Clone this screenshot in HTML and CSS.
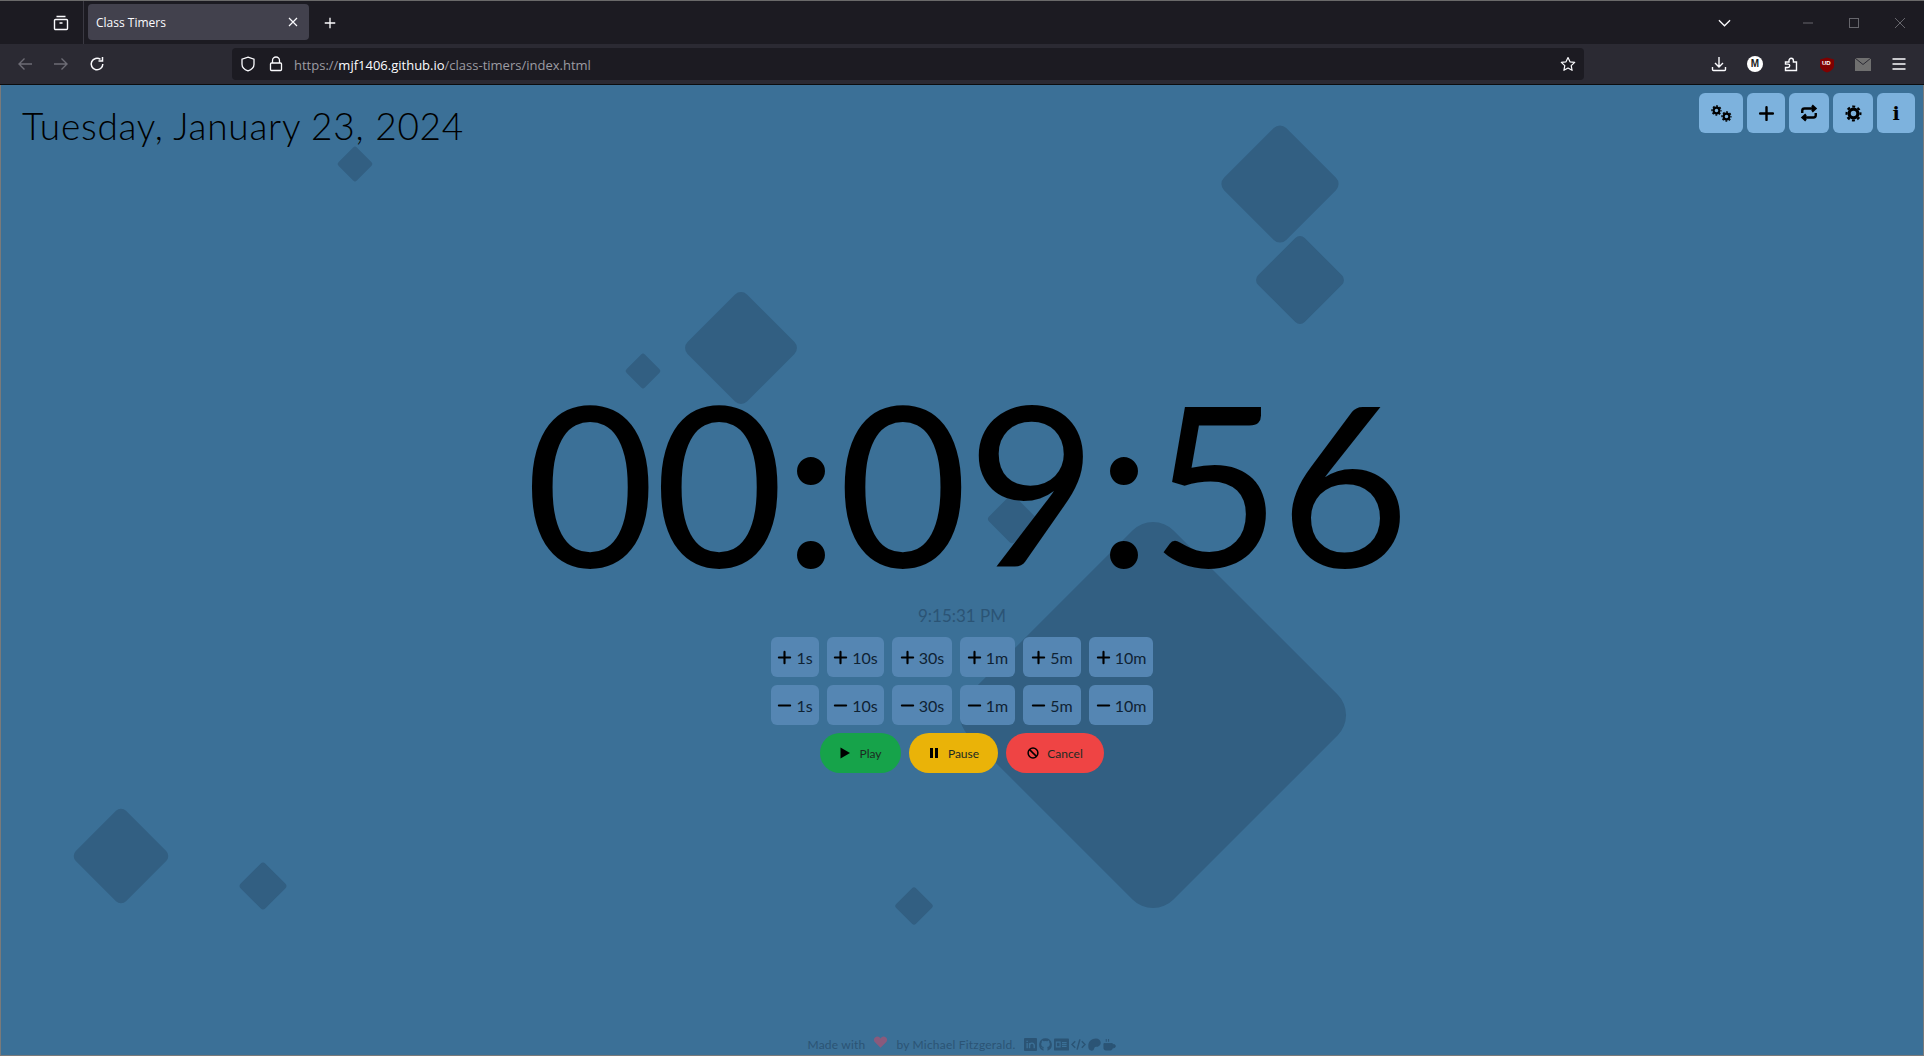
FILE: index.html
```html
<!DOCTYPE html>
<html lang="en">
<head>
    <meta charset="UTF-8">
    <title>Class Timers</title>
    <link rel="stylesheet" href="styles.css">
</head>
<body>
    <svg class="sprites" width="0" height="0">
        <symbol id="i-plus" viewBox="0 0 24 24"><path d="M12 3v18M3 12h18" fill="none" stroke="currentColor" stroke-width="3.400" stroke-linecap="round"/></symbol>
        <symbol id="i-minus" viewBox="0 0 24 24"><path d="M3 12h18" fill="none" stroke="currentColor" stroke-width="3.400" stroke-linecap="round"/></symbol>
        <symbol id="i-gear" viewBox="0 0 24 24">
            <circle cx="12" cy="12" r="6.200" fill="none" stroke="currentColor" stroke-width="4.600"/>
            <circle cx="12" cy="12" r="9.800" fill="none" stroke="currentColor" stroke-width="3" stroke-dasharray="4.200 3.500" stroke-dashoffset="2.100"/>
        </symbol>
    </svg>

    <div class="titlebar">
        <div class="tabs-view">
            <svg class="ff-icon" viewBox="0 0 16 16"><path d="M3.500 1.500h9M2.500 4.500h11a1 1 0 0 1 1 1v8a1 1 0 0 1-1 1h-11a1 1 0 0 1-1-1v-8a1 1 0 0 1 1-1zM6.500 8h3" fill="none" stroke="#fbfbfe" stroke-width="1.400"/></svg>
        </div>
        <div class="tab">
            <span class="tab-title">Class Timers</span>
            <svg class="tab-close" viewBox="0 0 12 12"><path d="M2 2l8 8M10 2l-8 8" stroke="#fbfbfe" stroke-width="1.200"/></svg>
        </div>
        <svg class="ff-icon new-tab" viewBox="0 0 16 16"><path d="M8 2v12M2 8h12" stroke="#fbfbfe" stroke-width="1.500"/></svg>
        <div class="titlebar-right">
            <svg class="tabs-list" viewBox="0 0 14 8"><path d="M1 1l6 6 6-6" fill="none" stroke="#fbfbfe" stroke-width="1.400"/></svg>
            <div class="win-controls">
                <svg viewBox="0 0 10 10"><path d="M0 5h10" stroke="#66666c" stroke-width="1"/></svg>
                <svg viewBox="0 0 10 10"><rect x=".5" y=".5" width="9" height="9" fill="none" stroke="#66666c"/></svg>
                <svg viewBox="0 0 10 10"><path d="M0 0l10 10M10 0L0 10" stroke="#66666c" stroke-width="1"/></svg>
            </div>
        </div>
    </div>

    <div class="toolbar">
        <div class="nav-buttons">
            <svg class="ff-icon" viewBox="0 0 16 16"><path d="M15 8H2M7.500 2.500L2 8l5.500 5.500" fill="none" stroke="#6d6c75" stroke-width="1.400"/></svg>
            <svg class="ff-icon" viewBox="0 0 16 16"><path d="M1 8h13M8.500 2.500L14 8l-5.500 5.500" fill="none" stroke="#6d6c75" stroke-width="1.400"/></svg>
            <svg class="ff-icon" viewBox="0 0 16 16"><path d="M13.800 8A5.800 5.800 0 1 1 11.500 3.400M13.500 1v4h-4" fill="none" stroke="#fbfbfe" stroke-width="1.500"/></svg>
        </div>
        <div class="urlbar">
            <svg class="ff-icon" viewBox="0 0 16 16"><path d="M8 1.200l6 2v5c0 3.500-3 5.600-6 6.700-3-1.100-6-3.200-6-6.700v-5z" fill="none" stroke="#fbfbfe" stroke-width="1.300"/></svg>
            <svg class="ff-icon" viewBox="0 0 16 16"><path d="M4.500 7V4.500a3.500 3.500 0 0 1 7 0V7M3.500 7h9a1 1 0 0 1 1 1v5.500a1 1 0 0 1-1 1h-9a1 1 0 0 1-1-1V8a1 1 0 0 1 1-1z" fill="none" stroke="#fbfbfe" stroke-width="1.300"/></svg>
            <span class="url"><span class="url-dim">https://</span>mjf1406.github.io<span class="url-dim">/class-timers/index.html</span></span>
            <svg class="ff-icon url-star" viewBox="0 0 16 16"><path d="M8 1.500l2 4.300 4.700.6-3.500 3.200.9 4.700L8 12l-4.100 2.300.9-4.700L1.300 6.400 6 5.800z" fill="none" stroke="#fbfbfe" stroke-width="1.200" stroke-linejoin="round"/></svg>
        </div>
        <div class="ext-buttons">
            <svg class="ff-icon" viewBox="0 0 16 16"><path d="M8 1v9.500M4 7l4 4 4-4M1.500 11v2.500a1 1 0 0 0 1 1h11a1 1 0 0 0 1-1V11" fill="none" stroke="#fbfbfe" stroke-width="1.400"/></svg>
            <span class="ext-m">M</span>
            <svg class="ff-icon" viewBox="0 0 16 16"><path d="M2.500 6H6V4.500a2.200 2.200 0 1 1 4.400 0V6h3.100v8.500h-11V11.500H5a1.700 1.700 0 0 0 0-3.400H2.500z" fill="none" stroke="#fbfbfe" stroke-width="1.400"/></svg>
            <span class="ext-ublock"><svg viewBox="0 0 16 16"><path d="M8 .5l7 2v6c0 3.500-3.500 5.800-7 7-3.500-1.200-7-3.500-7-7v-6z" fill="#800000"/></svg><span class="ext-ublock-text">UD</span></span>
            <svg class="ff-icon" viewBox="0 0 16 14"><path d="M0 1h16v13H0z" fill="#6f6f6f"/><path d="M0 1l8 6.500L16 1" fill="none" stroke="#2b2a33" stroke-width="1"/></svg>
            <svg class="ff-icon" viewBox="0 0 16 16"><path d="M1.500 3h13M1.500 8h13M1.500 13h13" stroke="#fbfbfe" stroke-width="1.500"/></svg>
        </div>
    </div>

    <div class="page">
        <div class="shape s1"></div>
        <div class="shape s2"></div>
        <div class="shape s3"></div>
        <div class="shape s4"></div>
        <div class="shape s5"></div>
        <div class="shape s6"></div>
        <div class="shape s7"></div>
        <div class="shape s8"></div>
        <div class="shape s9"></div>
        <div class="shape s10"></div>

        <div class="header">
            <h1 class="date">Tuesday, January 23, 2024</h1>
            <div class="top-buttons">
                <button class="top-btn wide">
                    <svg class="gear-a"><use href="#i-gear"/></svg>
                    <svg class="gear-b"><use href="#i-gear"/></svg>
                </button>
                <button class="top-btn"><svg class="top-icon"><use href="#i-plus"/></svg></button>
                <button class="top-btn mid">
                    <svg class="top-icon repeat" viewBox="0 0 24 24"><path d="M3 12V9a3 3 0 0 1 3-3h13M16 2l4.500 4-4.500 4M21 12v3a3 3 0 0 1-3 3H5M8 14l-4.500 4L8 22" fill="none" stroke="currentColor" stroke-width="3.200"/></svg>
                </button>
                <button class="top-btn mid"><svg class="top-icon cog"><use href="#i-gear"/></svg></button>
                <button class="top-btn"><span class="info">i</span></button>
            </div>
        </div>

        <div class="timer-block">
            <div class="timer">00:09:56</div>
            <div class="clock">9:15:31 PM</div>
            <div class="adjust-row">
                <button class="adjust"><svg><use href="#i-plus"/></svg>1s</button>
                <button class="adjust"><svg><use href="#i-plus"/></svg>10s</button>
                <button class="adjust"><svg><use href="#i-plus"/></svg>30s</button>
                <button class="adjust"><svg><use href="#i-plus"/></svg>1m</button>
                <button class="adjust"><svg><use href="#i-plus"/></svg>5m</button>
                <button class="adjust"><svg><use href="#i-plus"/></svg>10m</button>
            </div>
            <div class="adjust-row">
                <button class="adjust"><svg><use href="#i-minus"/></svg>1s</button>
                <button class="adjust"><svg><use href="#i-minus"/></svg>10s</button>
                <button class="adjust"><svg><use href="#i-minus"/></svg>30s</button>
                <button class="adjust"><svg><use href="#i-minus"/></svg>1m</button>
                <button class="adjust"><svg><use href="#i-minus"/></svg>5m</button>
                <button class="adjust"><svg><use href="#i-minus"/></svg>10m</button>
            </div>
            <div class="actions">
                <button class="action play"><svg viewBox="0 0 12 12"><path d="M1.500 .5v11l9.500-5.500z" fill="#000"/></svg>Play</button>
                <button class="action pause"><svg viewBox="0 0 12 12"><path d="M2 1h3v10H2zM7 1h3v10H7z" fill="#000"/></svg>Pause</button>
                <button class="action cancel"><svg viewBox="0 0 12 12"><circle cx="6" cy="6" r="4.900" fill="none" stroke="#000" stroke-width="1.500"/><path d="M2.600 2.600l6.800 6.800" stroke="#000" stroke-width="1.500"/></svg>Cancel</button>
            </div>
        </div>

        <div class="footer">
            <span>Made with</span>
            <svg class="heart" viewBox="0 0 16 14"><path d="M8 14L1.200 7.200A4 4 0 0 1 7 1.600L8 2.600l1-1a4 4 0 0 1 5.800 5.600z" fill="#8a5a7c"/></svg>
            <span>by Michael Fitzgerald.</span>
            <span class="socials">
                <svg viewBox="0 0 14 14"><path d="M1 0h12a1 1 0 0 1 1 1v12a1 1 0 0 1-1 1H1a1 1 0 0 1-1-1V1a1 1 0 0 1 1-1z" fill="#2b5475"/><path d="M3.400 5.500v5.500M3.400 3v1.300M6 11V5.500M6 8c0-3 5-3.500 5 0v3" fill="none" stroke="#3b7097" stroke-width="1.500"/></svg>
                <svg viewBox="0 0 14 14"><path d="M7 .2a6.900 6.900 0 0 0-2.200 13.400v-2.400C3 11.500 2.600 10.400 2.200 9.800c1 .2 1.500 1.200 2.600 1.100 0-.5.200-.8.400-1.100C3.500 9.500 2.400 8.700 2.400 6.500c0-.8.300-1.400.7-1.900-.1-.4-.2-1 .1-1.900.8 0 1.500.5 1.900.8a6.500 6.500 0 0 1 3.800 0c.4-.3 1.100-.8 1.900-.8.300.9.200 1.500.1 1.900.4.500.7 1.100.7 1.900 0 2.200-1.100 3-2.800 3.300.3.300.4.800.4 1.400v2.400A6.900 6.900 0 0 0 7 .2z" fill="#2b5475"/></svg>
                <svg class="card" viewBox="0 0 16 13"><path d="M1 0h14a1 1 0 0 1 1 1v11a1 1 0 0 1-1 1H1a1 1 0 0 1-1-1V1a1 1 0 0 1 1-1z" fill="#2b5475"/><path d="M2.500 4h4v5h-4zM8.500 4.500h5M8.500 6.500h5M8.500 8.500h5" fill="none" stroke="#3b7097" stroke-width="1.200"/></svg>
                <svg class="card" viewBox="0 0 16 13"><path d="M4.500 3L1 6.500 4.500 10M11.500 3L15 6.500 11.500 10M9.500 1L6.500 12" fill="none" stroke="#2b5475" stroke-width="1.600"/></svg>
                <svg viewBox="0 0 14 14"><path d="M8.500 .5c3 0 5.200 2 5.200 4.500 0 2.800-2.500 4.500-5 4.500-1.800 0-2 2-2.500 3-.4.900-1.500 1.500-3 1C1 13 .3 11 .3 8.500.3 3.500 4 .5 8.500 .5z" fill="#2b5475"/></svg>
                <svg viewBox="0 0 14 14"><path d="M1 6h9v5a2 2 0 0 1-2 2H3a2 2 0 0 1-2-2zM10 7h1.500a1.800 1.800 0 0 1 0 3.600H10" fill="#2b5475" stroke="#2b5475"/><path d="M3.500 1v3M6 1v3" stroke="#2b5475" stroke-width="1.100"/></svg>
            </span>
        </div>
    </div>
</body>
</html>
```

FILE: styles.css
```css
* {
    margin: 0;
    padding: 0;
    box-sizing: border-box;
}

html, body {
    height: 100%;
    overflow: hidden;
}

body {
    font-family: "Open Sans", "Noto Sans", sans-serif;
    background: #3b7097;
    display: flex;
    flex-direction: column;
}

button {
    border: none;
    font: inherit;
    color: inherit;
}

.sprites {
    position: absolute;
}

/* browser chrome */
.titlebar {
    height: 44px;
    background: #1c1b22;
    border-top: 1px solid #6a6a6a;
    display: flex;
    align-items: center;
}

.ff-icon {
    width: 16px;
    height: 16px;
    flex: none;
}

.tabs-view {
    width: 84px;
    height: 100%;
    padding-left: 53px;
    display: flex;
    align-items: center;
    border-right: 1px solid #3a3942;
}

.tab {
    width: 221px;
    height: 36px;
    margin-left: 4px;
    margin-top: -2px;
    padding: 1px 10px 0 8px;
    background: #42414d;
    border-radius: 4px;
    display: flex;
    align-items: center;
    justify-content: space-between;
    color: #fbfbfe;
    font-size: 12px;
}

.tab-close {
    width: 12px;
    height: 12px;
}

.new-tab {
    margin-left: 14px;
    width: 14px;
    height: 14px;
}

.titlebar-right {
    margin-left: auto;
    display: flex;
    align-items: center;
}

.tabs-list {
    width: 13px;
    height: 8px;
    margin-right: 72px;
}

.win-controls {
    display: flex;
    gap: 36px;
    padding-right: 19px;
}

.win-controls svg {
    width: 10px;
    height: 10px;
}

.toolbar {
    height: 41px;
    background: #2b2a33;
    border-bottom: 1px solid #0c0c0d;
    display: flex;
    align-items: center;
}

.nav-buttons {
    display: flex;
    gap: 20px;
    padding-left: 17px;
}

.urlbar {
    width: 1352px;
    height: 32px;
    margin-left: 127px;
    padding: 0 8px;
    background: #1c1b22;
    border-radius: 4px;
    display: flex;
    align-items: center;
}

.urlbar .ff-icon + .ff-icon {
    margin-left: 12px;
}

.url {
    margin-left: 10px;
    padding-top: 2px;
    font-size: 13px;
    color: #fbfbfe;
}

.url-dim {
    color: #9d9ca3;
}

.urlbar .url-star {
    margin-left: auto;
}

.ext-buttons {
    display: flex;
    align-items: center;
    gap: 20px;
    margin-left: 127px;
}

.ext-m {
    width: 16px;
    height: 16px;
    border-radius: 50%;
    background: #fff;
    color: #1c1b22;
    font: bold 10px/16px "Liberation Sans", sans-serif;
    text-align: center;
}

.ext-ublock {
    position: relative;
    width: 16px;
    height: 16px;
}

.ext-ublock svg {
    width: 16px;
    height: 16px;
}

.ext-ublock-text {
    position: absolute;
    left: 3px;
    top: 4px;
    color: #fff;
    font: bold 6px/7px "Liberation Sans", sans-serif;
}

/* page */
.page {
    position: relative;
    flex: 1;
    display: flex;
    flex-direction: column;
    overflow: hidden;
    font-family: "Lato", "Noto Sans", sans-serif;
}

/* window edge, sits above the shapes */
.page::after {
    content: "";
    position: absolute;
    inset: 0;
    border: 1px solid #7a7a7a;
    border-top: none;
    pointer-events: none;
}

.shape {
    position: absolute;
    background: #325f82;
    transform: translate(-50%, -50%) rotate(45deg);
    border-radius: 10%;
}

.s1 { left: 355px; top: 79px; width: 26px; height: 26px; }
.s2 { left: 1280px; top: 99px; width: 88px; height: 88px; }
.s3 { left: 1300px; top: 195px; width: 66px; height: 66px; }
.s4 { left: 741px; top: 263px; width: 84px; height: 84px; }
.s5 { left: 643px; top: 286px; width: 26px; height: 26px; }
.s6 { left: 1012px; top: 434px; width: 36px; height: 36px; }
.s7 { left: 1153px; top: 630px; width: 290px; height: 290px; }
.s8 { left: 121px; top: 771px; width: 71px; height: 71px; }
.s9 { left: 263px; top: 801px; width: 35px; height: 35px; }
.s10 { left: 914px; top: 821px; width: 28px; height: 28px; }

.header {
    position: relative;
    display: flex;
    justify-content: space-between;
    align-items: flex-start;
    padding: 8px 9px 0 22px;
}

.date {
    margin-top: 11px;
    font-size: 37px;
    line-height: 44px;
    font-weight: 300;
    color: #000;
    letter-spacing: 0.75px;
}

.top-buttons {
    display: flex;
    gap: 4px;
}

.top-btn {
    position: relative;
    width: 38px;
    height: 40px;
    background: #7db2dd;
    border-radius: 6px;
    display: flex;
    align-items: center;
    justify-content: center;
    color: #000;
}

.top-btn.wide {
    width: 44px;
}

.top-btn.mid {
    width: 40px;
}

.top-icon {
    width: 17px;
    height: 17px;
}

.top-icon.repeat {
    width: 18px;
    height: 18px;
}

.gear-a, .gear-b {
    position: absolute;
    width: 11px;
    height: 11px;
}

.gear-a {
    left: 12px;
    top: 12px;
}

.gear-b {
    left: 22px;
    top: 18px;
}

.info {
    font: bold 19px "DejaVu Serif", serif;
}

.timer-block {
    position: relative;
    margin-top: 213px;
    display: flex;
    flex-direction: column;
    align-items: center;
}

.timer {
    margin-left: 10px;
    font-size: 224px;
    line-height: 240px;
    font-weight: 400;
    color: #000;
    letter-spacing: -1px;
    white-space: nowrap;
}

.clock {
    padding-top: 2px;
    font-size: 17px;
    line-height: 26px;
    font-weight: 400;
    color: #2b5475;
}

.adjust-row {
    display: grid;
    grid-template-columns: 48px 57px 60px 55px 58px 64px;
    gap: 8px;
    margin-top: 8px;
}

.adjust {
    height: 40px;
    background: #5586b3;
    border-radius: 6px;
    display: flex;
    align-items: center;
    justify-content: center;
    gap: 4px;
    font-size: 16px;
    font-weight: 400;
    color: #0f2233;
}

.adjust svg {
    width: 15px;
    height: 15px;
    color: #000;
}

.actions {
    display: grid;
    grid-template-columns: 81px 89px 98px;
    gap: 8px;
    margin-top: 8px;
}

.action {
    height: 40px;
    border-radius: 20px;
    display: flex;
    align-items: center;
    justify-content: center;
    gap: 8px;
    font-size: 12px;
    color: #1c2a22;
}

.action svg {
    width: 12px;
    height: 12px;
}

.play { background: #16a34a; }
.pause { background: #eab308; }
.cancel { background: #ef4444; }

.footer {
    position: absolute;
    left: 0;
    right: 0;
    bottom: 2px;
    height: 20px;
    display: flex;
    align-items: center;
    justify-content: center;
    gap: 7px;
    font-size: 12px;
    letter-spacing: 0.2px;
    color: #2b5475;
}

.heart {
    width: 13px;
    height: 12px;
    margin: -4px 2px 0;
}

.socials {
    display: flex;
    align-items: center;
    gap: 2px;
    margin-left: 2px;
}

.socials svg {
    width: 13px;
    height: 13px;
}

.socials svg.card {
    width: 15px;
}
```
